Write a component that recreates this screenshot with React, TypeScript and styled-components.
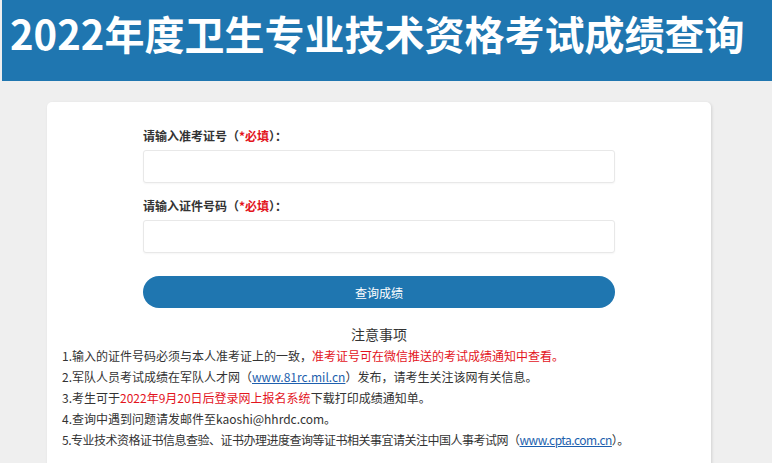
import React, { useState } from 'react';
import styled, { createGlobalStyle } from 'styled-components';

const GlobalStyle = createGlobalStyle`
  html, body {
    margin: 0;
    padding: 0;
    background: #efefef;
  }
  body {
    font-family: "Microsoft YaHei", "Noto Sans CJK SC", "Noto Sans", sans-serif;
    color: #333;
  }
`;

const Page = styled.div`
  min-height: 463px;
  padding-left: 2px;
  background: #efefef;
`;

const Header = styled.div`
  height: 81px;
  background: #1f76b0;
  display: flex;
  align-items: flex-start;
  padding-left: 8px;
  box-sizing: border-box;
`;

const Title = styled.h1`
  margin: 7px 0 0 0;
  font-size: 40px;
  line-height: 52px;
  font-weight: 700;
  color: #fff;
  font-family: "Noto Sans CJK SC", "Noto Sans", sans-serif;
`;

const Main = styled.div`
  padding: 21px 0 0 45px;
`;

const Card = styled.div`
  width: 664px;
  min-height: 380px;
  background: #fff;
  border-radius: 5px;
  box-shadow: 1px 1px 3px rgba(0, 0, 0, 0.12);
  padding: 24px 15px 0;
  box-sizing: border-box;
`;

const Form = styled.form`
  width: 472px;
  margin: 0 auto;
`;

const Field = styled.div`
  margin-bottom: 13px;
`;

const Label = styled.label`
  display: block;
  height: 20px;
  line-height: 20px;
  font-size: 12px;
  font-weight: 700;
  color: #333;
  margin-bottom: 4px;
`;

const Red = styled.span`
  color: #e3141d;
`;

const Input = styled.input`
  display: block;
  width: 100%;
  height: 33px;
  box-sizing: border-box;
  border: 1px solid #e8e8e8;
  border-radius: 3px;
  box-shadow: 0 1px 2px rgba(0, 0, 0, 0.04);
  padding: 0 10px;
  font-size: 13px;
  outline: none;
`;

const SubmitButton = styled.button`
  display: block;
  width: 100%;
  height: 32px;
  margin-top: 23px;
  border: none;
  border-radius: 16px;
  background: #1f76b0;
  color: #fff;
  font-size: 12px;
  font-family: inherit;
  cursor: pointer;
`;

const NoticeTitle = styled.div`
  margin-top: 16px;
  text-align: center;
  font-size: 14px;
  line-height: 20px;
  color: #333;
`;

const NoticeList = styled.ul`
  list-style: none;
  margin: 1px 0 0 0;
  padding: 0;
`;

const NoticeItem = styled.li<{ $tight?: boolean }>`
  font-size: 12px;
  line-height: 21px;
  color: #333;
  white-space: nowrap;
  letter-spacing: ${(p) => (p.$tight ? '-0.5px' : '0')};
`;

const Link = styled.a`
  color: #1d5fae;
  text-decoration: underline;
`;

const App: React.FC = () => {
  const [examNo, setExamNo] = useState('');
  const [idNo, setIdNo] = useState('');

  return (
    <Page>
      <GlobalStyle />
      <Header>
        <Title>2022年度卫生专业技术资格考试成绩查询</Title>
      </Header>
      <Main>
        <Card>
          <Form onSubmit={(e) => e.preventDefault()}>
            <Field>
              <Label>
                请输入准考证号（<Red>*必填</Red>）：
              </Label>
              <Input value={examNo} onChange={(e) => setExamNo(e.target.value)} />
            </Field>
            <Field>
              <Label>
                请输入证件号码（<Red>*必填</Red>）：
              </Label>
              <Input value={idNo} onChange={(e) => setIdNo(e.target.value)} />
            </Field>
            <SubmitButton type="submit">查询成绩</SubmitButton>
          </Form>
          <NoticeTitle>注意事项</NoticeTitle>
          <NoticeList>
            <NoticeItem>
              1.输入的证件号码必须与本人准考证上的一致，<Red>准考证号可在微信推送的考试成绩通知中查看。</Red>
            </NoticeItem>
            <NoticeItem>
              2.军队人员考试成绩在军队人才网（<Link href="#">www.81rc.mil.cn</Link>）发布，请考生关注该网有关信息。
            </NoticeItem>
            <NoticeItem>
              3.考生可于<Red>2022年9月20日后登录网上报名系统</Red>下载打印成绩通知单。
            </NoticeItem>
            <NoticeItem>4.查询中遇到问题请发邮件至kaoshi@hhrdc.com。</NoticeItem>
            <NoticeItem $tight>
              5.专业技术资格证书信息查验、证书办理进度查询等证书相关事宜请关注中国人事考试网（<Link href="#">www.cpta.com.cn</Link>）。
            </NoticeItem>
          </NoticeList>
        </Card>
      </Main>
    </Page>
  );
};

export default App;
